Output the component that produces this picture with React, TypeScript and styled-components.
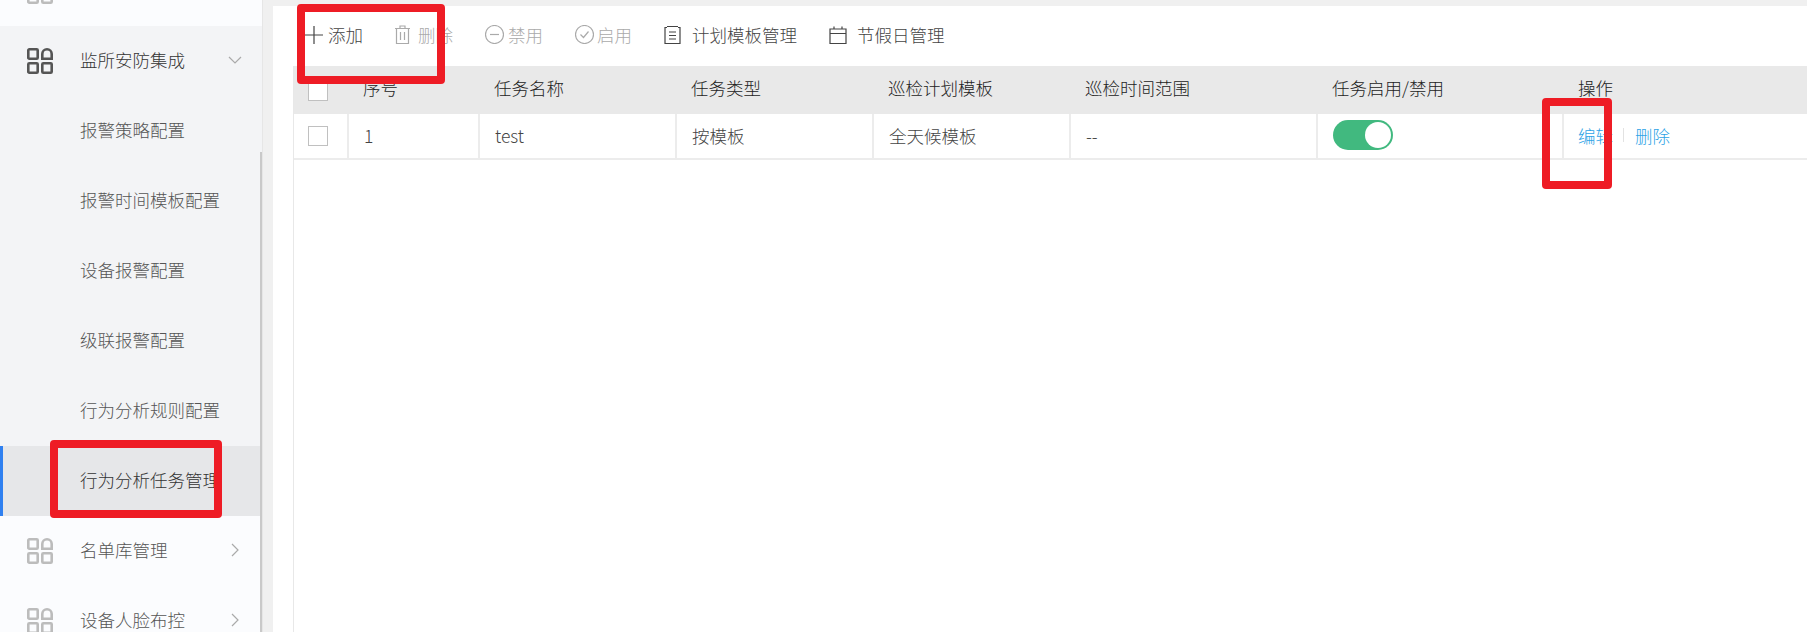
import React from 'react'
import styled, { createGlobalStyle } from 'styled-components'

const columns = '53px 131px 197px 197px 197px 247px 246px 1fr'

const subItems = ['报警策略配置', '报警时间模板配置', '设备报警配置', '级联报警配置', '行为分析规则配置', '行为分析任务管理']

const GridIcon = ({ dim }: { dim?: boolean }) => (
  <MenuIcon viewBox="0 0 26 26" $dim={dim}>
    <rect x="1.3" y="1.3" width="9.4" height="9.4" rx="1" />
    <path d="M15.3 10.7V6a4.7 4.7 0 0 1 9.4 0v4.7z" />
    <rect x="1.3" y="15.3" width="9.4" height="9.4" rx="1" />
    <rect x="15.3" y="15.3" width="9.4" height="9.4" rx="1" />
  </MenuIcon>
)

const Chevron = ({ open }: { open?: boolean }) => (
  <ChevronIcon viewBox="0 0 14 14">
    <path d={open ? 'M1 4l6 6 6-6' : 'M4 1l6 6-6 6'} />
  </ChevronIcon>
)

const Check = ({ header }: { header?: boolean }) => <Checkbox $header={header} />

export default function App() {
  return (
    <Page>
      <GlobalStyle />
      <Sidebar>
        <ClippedItem>
          <GridIcon dim />
        </ClippedItem>
        <Group>
          <MenuItem>
            <GridIcon />
            <GroupTitle>监所安防集成</GroupTitle>
            <Chevron open />
          </MenuItem>
          {subItems.map((label, i) => (
            <SubItem key={label} $active={i === subItems.length - 1}>
              {label}
            </SubItem>
          ))}
        </Group>
        <MenuItem>
          <GridIcon dim />
          <ItemTitle>名单库管理</ItemTitle>
          <Chevron />
        </MenuItem>
        <MenuItem>
          <GridIcon dim />
          <ItemTitle>设备人脸布控</ItemTitle>
          <Chevron />
        </MenuItem>
        <ScrollThumb />
      </Sidebar>

      <Main>
        <Toolbar>
          <ToolButton $gap={5}>
            <ToolIcon viewBox="0 0 18 18" $size={18}>
              <path d="M9 0v18M0 9h18" />
            </ToolIcon>
            添加
          </ToolButton>
          <ToolButton $disabled $gap={8}>
            <ToolIcon viewBox="0 0 15 19" $size={15} $h={19}>
              <path d="M0 3.5h15M5 3.5V1h5v2.5M1.5 3.5v15h12v-15M5.5 7v8M9.5 7v8" />
            </ToolIcon>
            删除
          </ToolButton>
          <ToolButton $disabled $gap={4}>
            <ToolIcon viewBox="0 0 19 19" $size={19}>
              <circle cx="9.5" cy="9.5" r="9" />
              <path d="M5 9.5h9" />
            </ToolIcon>
            禁用
          </ToolButton>
          <ToolButton $disabled $gap={3}>
            <ToolIcon viewBox="0 0 19 19" $size={19}>
              <circle cx="9.5" cy="9.5" r="9" />
              <path d="M5.5 9.5l3 3 5-6" />
            </ToolIcon>
            启用
          </ToolButton>
          <ToolButton $gap={11}>
            <ToolIcon viewBox="0 0 17 18" $size={17} $h={18}>
              <path d="M3 1.5H1v16h15v-16h-2M3 .5h11M5 6h7M5 9.5h7M5 13h7" />
            </ToolIcon>
            计划模板管理
          </ToolButton>
          <ToolButton $gap={10}>
            <ToolIcon viewBox="0 0 18 18" $size={18}>
              <path d="M1 3h16v14.5H1zM1 7.5h16M5 .5V3M13 .5V3" />
            </ToolIcon>
            节假日管理
          </ToolButton>
        </Toolbar>

        <Table>
          <HeadRow>
            <HeadCell $check>
              <Check header />
            </HeadCell>
            <HeadCell>序号</HeadCell>
            <HeadCell>任务名称</HeadCell>
            <HeadCell>任务类型</HeadCell>
            <HeadCell>巡检计划模板</HeadCell>
            <HeadCell>巡检时间范围</HeadCell>
            <HeadCell>任务启用/禁用</HeadCell>
            <HeadCell>操作</HeadCell>
          </HeadRow>
          <BodyRow>
            <BodyCell $check>
              <Check />
            </BodyCell>
            <BodyCell>1</BodyCell>
            <BodyCell>test</BodyCell>
            <BodyCell>按模板</BodyCell>
            <BodyCell>全天候模板</BodyCell>
            <BodyCell>--</BodyCell>
            <BodyCell>
              <Toggle />
            </BodyCell>
            <BodyCell>
              <Actions>
                <ActionLink>编辑</ActionLink>
                <ActionDivider />
                <ActionLink>删除</ActionLink>
              </Actions>
            </BodyCell>
          </BodyRow>
        </Table>
      </Main>

      <Annotation $left={297} $top={4} $width={148} $height={80} />
      <Annotation $left={50} $top={440} $width={172} $height={78} />
      <Annotation $left={1542} $top={98} $width={70} $height={91} />
    </Page>
  )
}

const GlobalStyle = createGlobalStyle`
  html, body {
    margin: 0;
    height: 100%;
    overflow: hidden;
  }
  body {
    font-family: "Noto Sans CJK SC", "Liberation Sans", sans-serif;
    font-size: 17.5px;
    font-weight: 300;
    color: #333;
  }
  * {
    box-sizing: border-box;
  }
`

const Page = styled.div`
  position: relative;
  display: flex;
  width: 1807px;
  height: 632px;
  overflow: hidden;
  background: #f0f0f0;
`

const Sidebar = styled.div`
  position: relative;
  flex: none;
  width: 263px;
  height: 632px;
  overflow: hidden;
  background: #fbfcfe;
  border-right: 1px solid #e6e6e6;
`

const ScrollThumb = styled.div`
  position: absolute;
  right: 0;
  top: 152px;
  bottom: 0;
  width: 2px;
  background: #c9c9c9;
`

const MenuItem = styled.div`
  display: flex;
  align-items: center;
  height: 70px;
  padding-left: 27px;
`

const ClippedItem = styled(MenuItem)`
  margin-top: -44px;
`

const MenuIcon = styled.svg<{ $dim?: boolean }>`
  flex: none;
  width: 26px;
  height: 26px;
  fill: none;
  stroke: ${(p) => (p.$dim ? '#bcbcbc' : '#555')};
  stroke-width: 2.6;
`

const GroupTitle = styled.span`
  margin-left: 27px;
  margin-bottom: 3px;
  width: 148px;
  color: #333;
`

const ItemTitle = styled(GroupTitle)`
  color: #555;
`

const ChevronIcon = styled.svg`
  flex: none;
  width: 14px;
  height: 14px;
  margin-bottom: 2px;
  fill: none;
  stroke: #aaa;
  stroke-width: 1.2;
`

const Group = styled.div`
  background: #f3f4f6;
`

const SubItem = styled.div<{ $active?: boolean }>`
  display: flex;
  align-items: center;
  height: 70px;
  padding-left: 80px;
  padding-bottom: 3px;
  white-space: nowrap;
  color: ${(p) => (p.$active ? '#333' : '#555')};
  background: ${(p) => (p.$active ? '#e6e7e9' : 'transparent')};
  border-left: ${(p) => (p.$active ? '3px solid #2f80f0' : 'none')};
  ${(p) => p.$active && 'padding-left: 77px;'}
`

const Main = styled.div`
  flex: 1;
  margin-left: 10px;
  margin-top: 6px;
  padding-left: 20px;
  background: #fff;
  display: flex;
  flex-direction: column;
  min-width: 0;
`

const Toolbar = styled.div`
  display: flex;
  align-items: center;
  gap: 32px;
  height: 60px;
  padding-left: 12px;
  padding-bottom: 3px;
`

const ToolButton = styled.div<{ $disabled?: boolean; $gap: number }>`
  display: flex;
  align-items: center;
  gap: ${(p) => p.$gap}px;
  white-space: nowrap;
  color: ${(p) => (p.$disabled ? '#aaa' : '#444')};
`

const ToolIcon = styled.svg<{ $size: number; $h?: number }>`
  flex: none;
  width: ${(p) => p.$size}px;
  height: ${(p) => p.$h ?? p.$size}px;
  fill: none;
  stroke: currentColor;
  stroke-width: 1.2;
`

const Table = styled.div`
  flex: 1;
  border-left: 1px solid #e8e8e8;
`

const HeadRow = styled.div`
  display: grid;
  grid-template-columns: ${columns};
  height: 48px;
  background: #e9e9e9;
  color: #222;
`

const BodyRow = styled.div`
  display: grid;
  grid-template-columns: ${columns};
  height: 46px;
  border-bottom: 2px solid #ececec;
  color: #444;
`

const HeadCell = styled.div<{ $check?: boolean }>`
  display: flex;
  align-items: center;
  padding-left: ${(p) => (p.$check ? '14px' : '16px')};
  padding-bottom: ${(p) => (p.$check ? '0' : '5px')};
  white-space: nowrap;
`

const BodyCell = styled(HeadCell)`
  border-left: 2px solid #ececec;
  padding-left: 15px;
  padding-bottom: 2px;
  &:first-child {
    border-left: none;
    padding-left: 14px;
    padding-bottom: 0;
  }
`

const Checkbox = styled.div<{ $header?: boolean }>`
  width: 20px;
  height: 20px;
  background: #fff;
  border: 1px solid #c0c0c0;
  ${(p) => p.$header && 'margin-top: 1px;'}
`

const Toggle = styled.div`
  position: relative;
  width: 60px;
  height: 30px;
  border-radius: 15px;
  background: #41b97f;
  &::after {
    content: '';
    position: absolute;
    right: 2px;
    top: 2px;
    width: 26px;
    height: 26px;
    border-radius: 50%;
    background: #fff;
  }
`

const Actions = styled.div`
  display: flex;
  align-items: center;
  margin-left: -1px;
`

const ActionLink = styled.span`
  color: #2ea3e6;
`

const ActionDivider = styled.span`
  width: 1px;
  height: 14px;
  margin: 0 11px 0 10px;
  background: #e2e2e2;
`

const Annotation = styled.div<{ $left: number; $top: number; $width: number; $height: number }>`
  position: absolute;
  left: ${(p) => p.$left}px;
  top: ${(p) => p.$top}px;
  width: ${(p) => p.$width}px;
  height: ${(p) => p.$height}px;
  border: 8px solid #ee1c25;
  border-radius: 4px;
`
